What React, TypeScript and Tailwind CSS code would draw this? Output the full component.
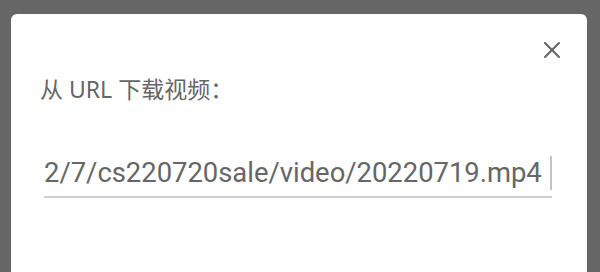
import { X } from 'lucide-react';

function App() {
  return (
    <div className="h-[272px] w-[600px] overflow-hidden bg-[#666666] pt-[14px] pl-[11px] pr-[13px]">
      {/* Dialog */}
      <div className="relative h-[300px] rounded-t-[6px] bg-white">
        <button className="absolute right-[21px] top-[22px] text-[#666666]">
          <X className="h-[28px] w-[28px]" strokeWidth={1.8} />
        </button>

        <div className="pt-[58px] pl-[29px]">
          <div
            className="text-[23px] leading-[34px] text-[#666666]"
            style={{ fontFamily: '"Noto Sans", "Noto Sans CJK SC", sans-serif' }}
          >
            从 URL 下载视频：
          </div>
        </div>

        {/* URL input */}
        <div className="mt-[45px] ml-[33px] mr-[35px]">
          <div className="flex h-[40px] items-center pt-[3px]">
            <span
              className="whitespace-nowrap text-[27.4px] leading-[36px] text-[#666666]"
              style={{ fontFamily: 'Roboto, sans-serif' }}
            >
              2/7/cs220720sale/video/20220719.mp4
            </span>
            <span className="ml-auto h-[34px] w-[2px] bg-[#c4c4c4]" />
          </div>
          <div className="mt-[5px] h-[2px] bg-[#cfcfcf]" />
        </div>
      </div>
    </div>
  );
}

export default App;
